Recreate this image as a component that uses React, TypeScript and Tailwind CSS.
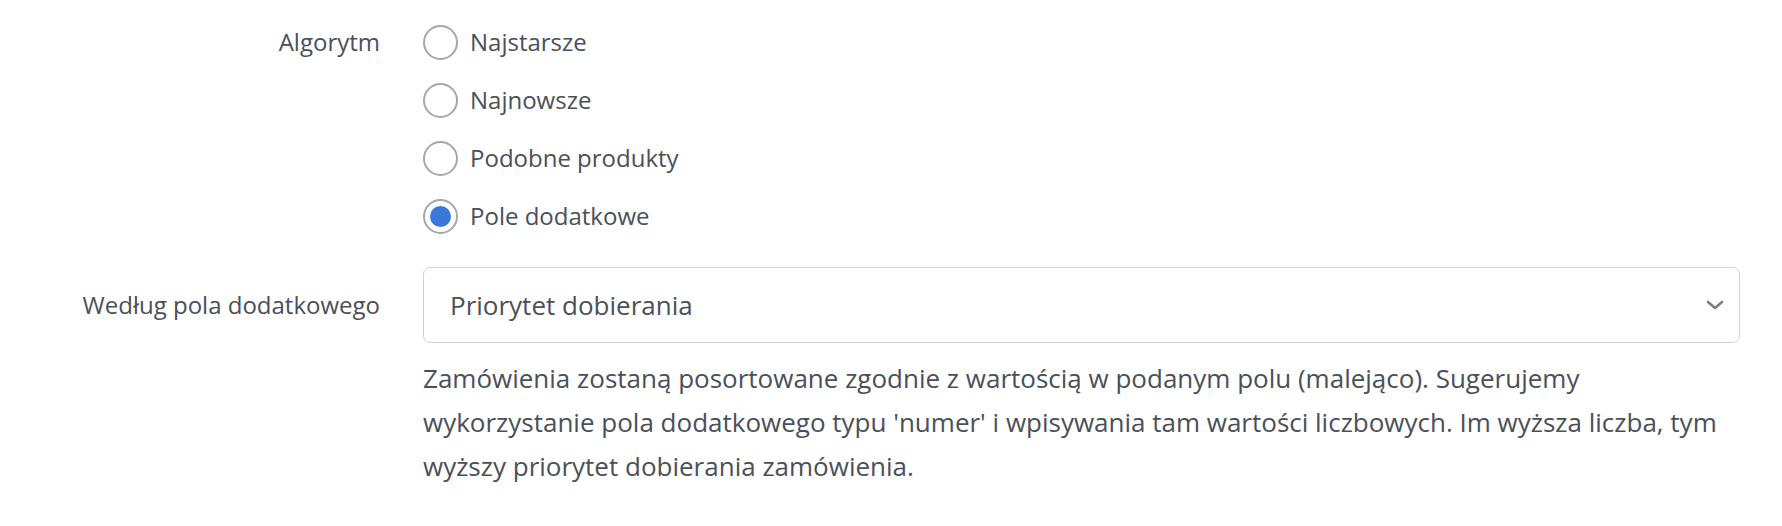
import React, { useState } from "react";

const options = ["Najstarsze", "Najnowsze", "Podobne produkty", "Pole dodatkowe"];

function Radio({ checked }: { checked: boolean }) {
  return (
    <span className="flex items-center justify-center w-[35px] h-[35px] rounded-full border-2 border-[#a3a7ae] bg-white shrink-0">
      {checked && <span className="w-[21px] h-[21px] rounded-full bg-[#3a77d8]" />}
    </span>
  );
}

export default function App() {
  const [algorithm, setAlgorithm] = useState("Pole dodatkowe");

  return (
    <div
      className="w-[1782px] h-[526px] bg-white text-[#4a5059] text-[24px] overflow-hidden"
      style={{ fontFamily: '"Open Sans", "Liberation Sans", sans-serif' }}
    >
      <div className="flex flex-col pt-[13px]">
        {/* Algorytm */}
        <div className="flex">
          <div className="w-[380px] text-right h-[58px] leading-[58px] shrink-0">Algorytm</div>
          <div className="flex flex-col pl-[43px]">
            {options.map((opt) => (
              <label
                key={opt}
                className="flex items-center gap-[12px] h-[58px] cursor-pointer"
                onClick={() => setAlgorithm(opt)}
              >
                <Radio checked={algorithm === opt} />
                <span>{opt}</span>
              </label>
            ))}
          </div>
        </div>

        {/* Według pola dodatkowego */}
        <div className="flex mt-[22px]">
          <div className="w-[380px] text-right h-[76px] leading-[76px] shrink-0">Według pola dodatkowego</div>
          <div className="flex flex-col pl-[43px] w-[1360px]">
            <div className="flex items-center justify-between h-[76px] border border-[#cfd3d8] rounded-[7px] pl-[26px] pr-[15px]">
              <span className="text-[26px]">Priorytet dobierania</span>
              <svg width="18" height="10" viewBox="0 0 18 10" fill="none">
                <path d="M2 2 L9 8 L16 2" stroke="#7a7f87" strokeWidth="2.6" strokeLinecap="round" strokeLinejoin="round" />
              </svg>
            </div>
            <p className="mt-[13px] text-[26px] leading-[44px]">
              Zamówienia zostaną posortowane zgodnie z wartością w podanym polu (malejąco). Sugerujemy
              <br />
              wykorzystanie pola dodatkowego typu 'numer' i wpisywania tam wartości liczbowych. Im wyższa liczba, tym
              <br />
              wyższy priorytet dobierania zamówienia.
            </p>
          </div>
        </div>
      </div>
    </div>
  );
}
